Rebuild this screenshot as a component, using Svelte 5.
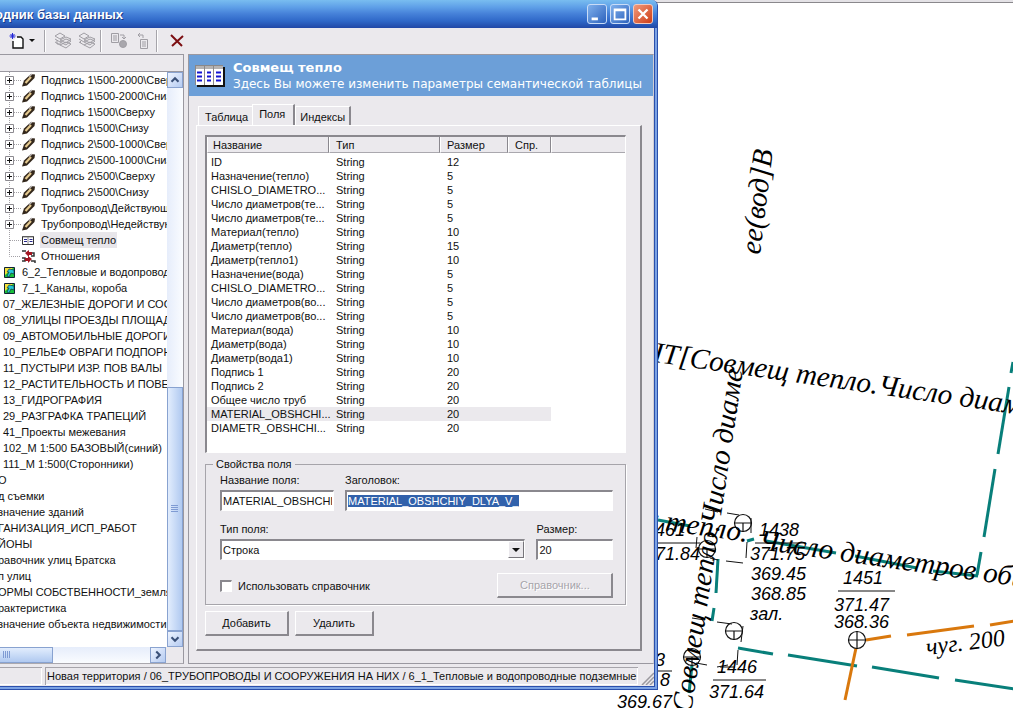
<script>
  import { onMount } from 'svelte';

  const pens = [
    'Подпись 1\\500-2000\\Сверху', 'Подпись 1\\500-2000\\Снизу', 'Подпись 1\\500\\Сверху',
    'Подпись 1\\500\\Снизу', 'Подпись 2\\500-1000\\Сверху', 'Подпись 2\\500-1000\\Снизу',
    'Подпись 2\\500\\Сверху', 'Подпись 2\\500\\Снизу', 'Трубопровод\\Действующий',
    'Трубопровод\\Недействующий'
  ];
  const tree = [
    ...pens.map((text) => ({ text, kind: 'pen' })),
    { text: 'Совмещ тепло', kind: 'table', selected: true },
    { text: 'Отношения', kind: 'relation' },
    { text: '6_2_Тепловые и водопроводные', kind: 'layer' },
    { text: '7_1_Каналы, короба', kind: 'layer' },
    ...[
      '07_ЖЕЛЕЗНЫЕ ДОРОГИ И СООРУЖЕНИЯ', '08_УЛИЦЫ ПРОЕЗДЫ ПЛОЩАДИ', '09_АВТОМОБИЛЬНЫЕ ДОРОГИ',
      '10_РЕЛЬЕФ ОВРАГИ ПОДПОРНЫЕ', '11_ПУСТЫРИ ИЗР. ПОВ ВАЛЫ', '12_РАСТИТЕЛЬНОСТЬ И ПОВЕРХ',
      '13_ГИДРОГРАФИЯ', '29_РАЗГРАФКА ТРАПЕЦИЙ', '41_Проекты межевания',
      '102_М 1:500 БАЗОВЫЙ(синий)', '111_М 1:500(Сторонники)'
    ].map((text) => ({ text, kind: 'group' })),
    ...[
      'О', 'д съемки', 'значение зданий', 'ГАНИЗАЦИЯ_ИСП_РАБОТ', 'ЙОНЫ', 'равочник улиц Братска',
      'п улиц', 'ОРМЫ СОБСТВЕННОСТИ_земля', 'рактеристика', 'значение объекта недвижимости'
    ].map((text) => ({ text, kind: 'root' }))
  ];

  const fields = [
    ['ID', 12], ['Назначение(тепло)', 5], ['CHISLO_DIAMETRO...', 5], ['Число диаметров(те...', 5],
    ['Число диаметров(те...', 5], ['Материал(тепло)', 10], ['Диаметр(тепло)', 15],
    ['Диаметр(тепло1)', 10], ['Назначение(вода)', 5], ['CHISLO_DIAMETRO...', 5],
    ['Число диаметров(во...', 5], ['Число диаметров(во...', 5], ['Материал(вода)', 10],
    ['Диаметр(вода)', 10], ['Диаметр(вода1)', 10], ['Подпись 1', 20], ['Подпись 2', 20],
    ['Общее число труб', 20], ['MATERIAL_OBSHCHI...', 20], ['DIAMETR_OBSHCHI...', 20]
  ];
  let selected = $state(18);
  let caption;

  onMount(() => {
    caption.focus();
    caption.select();
  });

  const teal = [
    [1013, 362, 1011, 373], [1009, 387, 998, 454], [995, 469, 984, 537], [981, 552, 977, 575],
    [658, 520, 690, 526], [747, 541, 754, 539], [766, 541, 836, 553], [855, 556, 917, 568],
    [933, 571, 978, 576], [738, 648, 773, 654], [788, 655, 857, 666], [872, 667, 939, 678],
    [955, 680, 1014, 689], [718, 559, 716, 593], [714, 608, 712, 621], [692, 665, 689, 693]
  ];
  const orange = [[866, 640, 891, 636], [907, 635, 974, 626], [990, 625, 1014, 621], [856, 648, 845, 700]];
  const thin = [
    [705, 509, 718, 512], [727, 513, 739, 515], [751, 518, 751, 533], [747, 542, 746, 558],
    [743, 563, 726, 561], [718, 560, 710, 558], [697, 537, 696, 548], [692, 618, 705, 620],
    [717, 622, 732, 624], [743, 626, 741, 642], [738, 650, 737, 665], [707, 665, 696, 663],
    [717, 667, 728, 665], [755, 543, 806, 543], [838, 591, 895, 591], [713, 680, 766, 680],
    [658, 543, 700, 543], [655, 671, 672, 671], [720, 667, 735, 667]
  ];
  const wells = [[743, 523], [707, 549], [734, 631], [692, 657], [857, 640]];
  const labels = [
    ['1438', 759, 536], ['371.75', 750, 560], ['369.45', 751, 580], ['368.85', 751, 600], ['зал.', 750, 620],
    ['1451', 843, 584], ['371.47', 834, 611], ['368.36', 834, 628], ['1446', 717, 673], ['371.64', 709, 698],
    ['369.67', 617, 708]
  ];
  const cutLabels = [['1461', 685, 536], ['371.84', 700, 560], ['3', 665, 666], ['8', 670, 686]];
</script>

<div class="desktop">
  <svg class="map" aria-label="План">
    <rect x="0" y="0" width="100%" height="2" fill="#e4e2e6" />
    <rect x="0" y="2" width="100%" height="1" fill="#8a888c" />
    <g stroke="#087f7a" stroke-width="3">
      {#each teal as [x1, y1, x2, y2]}<line {x1} {y1} {x2} {y2} />{/each}
    </g>
    <g stroke="#d9780d" stroke-width="3">
      {#each orange as [x1, y1, x2, y2]}<line {x1} {y1} {x2} {y2} />{/each}
    </g>
    <g stroke="#111" stroke-width="1">
      {#each thin as [x1, y1, x2, y2]}<line {x1} {y1} {x2} {y2} />{/each}
    </g>
    {#each wells as [x, y], i}
      <g stroke="#111" stroke-width="1.2" fill={i === 4 ? '#fff' : 'none'}>
        <circle cx={x} cy={y} r="8.500" />
        <path d="M{x - 9} {y}H{x + 9}M{x} {i === 4 ? y - 9 : y}V{y + 9}" />
      </g>
    {/each}
    <g class="marks">
      {#each labels as [t, x, y]}<text {x} {y}>{t}</text>{/each}
      {#each cutLabels as [t, x, y]}<text {x} {y} text-anchor="end">{t}</text>{/each}
    </g>
    <g class="notes">
      <text transform="translate(760 255) rotate(-83)">ее(вод]В</text>
      <text transform="translate(641 360) rotate(8.2)">НТ[Совмещ тепло.Число диаметров</text>
      <text transform="translate(743 370) rotate(-81.4)" text-anchor="end">Совмещ тепло.Число диаме</text>
      <text transform="translate(747 542) rotate(8.2)" text-anchor="end">Совмещ тепло.</text>
      <text transform="translate(758 549) rotate(8.2)">Число диаметров общее</text>
      <text class="pipe" transform="translate(927 655) rotate(-7)">чуг. 200</text>
    </g>
  </svg>

  <main class="window">
    <header class="title">
      <h1>одник базы данных</h1>
      <button class="cap" aria-label="Свернуть"><svg viewBox="0 0 20 20"><path d="M4 14h7v3H4z" fill="#fff" /></svg></button>
      <button class="cap" aria-label="Развернуть"><svg viewBox="0 0 20 20"><path d="M4 5h12v11H4z M4 6h12" fill="none" stroke="#fff" stroke-width="2" /></svg></button>
      <button class="cap close" aria-label="Закрыть"><svg viewBox="0 0 20 20"><path d="M5 5l10 10M15 5L5 15" stroke="#fff" stroke-width="2.600" /></svg></button>
    </header>

    <div class="face">
      <div class="toolbar">
        <button class="new" aria-label="Создать">
          <svg width="26" height="18" viewBox="0 0 26 18">
            <path d="M8 5h4l2 2v9H4V9" fill="#fff" stroke="#111" stroke-width="1.4" />
            <path d="M3.500 1v6M0.500 4h6M1.500 2l4 4M5.500 2l-4 4" stroke="#2326d8" />
            <path d="M20 7h6l-3 3z" fill="#111" />
          </svg>
        </button>
        <i class="sep"></i>
        {#each [0, 1] as n}
          <button class="tool" aria-label={n ? 'Убрать слой' : 'Добавить слой'}>
            <svg width="18" height="18" viewBox="0 0 18 18" fill="#ebe9ed" stroke="#a09ea4">
              <path d="M1 4l5-3 5 3-5 3zM1 7l5 3M1 10l5 3" />
              <path d="M6 13l6-3 5 2-5 4zM6 10l6-3 5 2-5 4zM6 8l6-3 5 2-5 4z" />
              <path d={n ? 'M4 12l-2-2 2-2' : 'M3 8v4h4'} fill="none" />
            </svg>
          </button>
        {/each}
        <i class="sep"></i>
        <button class="tool" aria-label="Свойства">
          <svg width="18" height="18" viewBox="0 0 18 18" fill="none" stroke="#a09ea4">
            <path d="M1.500 1.500h7v9h-7zM3 4h4M3 6h4M3 8h4M10 3h4v4M12 5l2 2 2-2" />
            <circle cx="13" cy="12" r="3.500" fill="#a9a7ad" />
          </svg>
        </button>
        <button class="tool" aria-label="Переместить">
          <svg width="18" height="18" viewBox="0 0 18 18" fill="none" stroke="#a09ea4">
            <path d="M6.500 7.500h7v9h-7zM8 10h4M8 12h4M8 14h4M9 6V3H4M6 1L4 3l2 2" />
          </svg>
        </button>
        <i class="sep"></i>
        <button class="tool del" aria-label="Удалить слой">
          <svg width="14" height="14" viewBox="0 0 14 14"><path d="M1 1l11 11M13 2L2 12" stroke="#7c0e12" stroke-width="2" /></svg>
        </button>
      </div>

      <div class="split">
        <section class="side">
          <div class="strip"></div>
          <div class="sidebody">
            <ul class="tree">
              {#each tree as n}
                <li class={n.kind} class:selected={n.selected}>
                  {#if n.kind === 'pen'}
                    <svg width="40" height="16" viewBox="0 0 40 16">
                      <path d="M9.500 0v16M14 8.500h7" stroke="#a3a1a6" stroke-dasharray="1 1" />
                      <path d="M5.500 4.500h8v8h-8z" fill="#fff" stroke="#8c8a90" />
                      <path d="M7 8.500h5M9.500 6v5" stroke="#111" />
                      <path d="M22 14.500l2-6 7-6.500 4 .5-.5 3.500-7.500 7.500z" fill="#33271b" />
                      <path d="M25.500 11l5.500-6" stroke="#e3c88e" stroke-width="2.200" />
                      <path d="M29 4.500l3-2.500" stroke="#b8b4b4" stroke-width="1.500" />
                    </svg>
                  {:else if n.kind === 'table'}
                    <svg width="40" height="16" viewBox="0 0 40 16">
                      <path d="M9.500 0v16M10 8.500h11" stroke="#a3a1a6" stroke-dasharray="1 1" />
                      <path d="M22.500 4.500h11v8h-11z" fill="#fff" stroke="#333" />
                      <path d="M23 5h10M28 5v7" stroke="#888" />
                      <path d="M24 7.500h3M24 9.500h3M29.500 7.500h3M29.500 9.500h3" stroke="#27278c" />
                    </svg>
                  {:else if n.kind === 'relation'}
                    <svg width="40" height="16" viewBox="0 0 40 16">
                      <path d="M9.500 0v8.500h11" fill="none" stroke="#a3a1a6" stroke-dasharray="1 1" />
                      <path d="M22 3h4M22 10h3v3h-3M31 5h3v3h-3M31 13h4v2" fill="none" stroke="#333" stroke-width="1.500" />
                      <path d="M25 5l4-3v2h3v3h-3v2zM32 11l-4-3v2h-3v3h3v2z" fill="#a31622" />
                    </svg>
                  {:else if n.kind === 'layer'}
                    <svg width="20" height="16" viewBox="0 0 20 16">
                      <path d="M3.500 3.500h10v10h-10z" fill="#19c03c" stroke="#123" />
                      <path d="M4 4h8l-8 7z" fill="#f3e23a" />
                      <path d="M6 8l2-3 5 1v4l-3-1-2 4-2-1 2-4z" fill="#24c7d8" stroke="#123" stroke-width=".6" />
                    </svg>
                  {/if}
                  <span>{n.text}</span>
                </li>
              {/each}
            </ul>
            <div class="vbar">
              <button class="arrow" aria-label="Вверх"><svg viewBox="0 0 16 16"><path d="M4 10l4-4 4 4" /></svg></button>
              <div class="vspace"></div>
              <div class="thumb"><svg width="8" height="9"><path d="M0 1.500h7M0 3.500h7M0 5.500h7M0 7.500h7" stroke="#7f9bd3" /></svg></div>
              <button class="arrow" aria-label="Вниз"><svg viewBox="0 0 16 16"><path d="M4 6l4 4 4-4" /></svg></button>
            </div>
          </div>
          <div class="hbar">
            <div class="hthumb"><svg width="9" height="8"><path d="M1.500 0v7M3.500 0v7M5.500 0v7M7.500 0v7" stroke="#7f9bd3" /></svg></div>
            <button class="arrow" aria-label="Вправо"><svg viewBox="0 0 16 16"><path d="M6 4l4 4-4 4" /></svg></button>
          </div>
        </section>

        <section class="content">
          <div class="banner">
            <svg width="30" height="22" viewBox="0 0 30 22">
              <path d="M2 2h28v20H2z" fill="#111" />
              <path d="M0 0h28v20H0z" fill="#fff" />
              <path d="M0 0h28v4H0z" fill="#b5b3b3" />
              <path d="M9.500 0v20M18.500 0v20M0 .5h28M.5 0v20" stroke="#8a8888" />
              <path d="M2 7.500h5M2 11.500h5M2 15.500h5M12 7.500h4M12 11.500h4M12 15.500h4M21 7.500h5M21 11.500h5M21 15.500h5" stroke="#1414d2" stroke-width="2" />
            </svg>
            <div>
              <h2>Совмещ тепло</h2>
              <p>Здесь Вы можете изменить параметры семантической таблицы</p>
            </div>
          </div>

          <div class="tabs" role="tablist">
            <button role="tab" aria-selected="false">Таблица</button>
            <button role="tab" aria-selected="true" class="on">Поля</button>
            <button role="tab" aria-selected="false">Индексы</button>
          </div>

          <div class="pane">
            <div class="list">
              <table>
                <colgroup><col class="c1" /><col class="c2" /><col class="c3" /><col class="c4" /><col /></colgroup>
                <thead><tr><th>Название</th><th>Тип</th><th>Размер</th><th>Спр.</th><th></th></tr></thead>
                <tbody>
                  {#each fields as [name, size], i}
                    <tr class:sel={selected === i} onclick={() => (selected = i)}>
                      <td>{name}</td><td>String</td><td>{size}</td><td></td><td></td>
                    </tr>
                  {/each}
                </tbody>
              </table>
            </div>

            <fieldset>
              <legend>Свойства поля</legend>
              <div class="row first">
                <label class="name">Название поля:<input value="MATERIAL_OBSHCHI" /></label>
                <label class="grow">Заголовок:<input bind:this={caption} value="MATERIAL_OBSHCHIY_DLYA_V_" /></label>
              </div>
              <div class="row second">
                <label class="grow">Тип поля:
                  <span class="combo">
                    <select><option>Строка</option></select>
                    <span class="drop"></span>
                  </span>
                </label>
                <label class="size">Размер:<input value="20" /></label>
              </div>
              <div class="row third">
                <label class="check"><input type="checkbox" />Использовать справочник</label>
                <button class="btn wide" disabled>Справочник...</button>
              </div>
            </fieldset>

            <div class="actions">
              <button class="btn add">Добавить</button>
              <button class="btn">Удалить</button>
            </div>
          </div>
        </section>
      </div>

      <footer class="status">
        <span class="cell small"></span>
        <span class="cell path">Новая территория / 06_ТРУБОПРОВОДЫ И СООРУЖЕНИЯ НА НИХ / 6_1_Тепловые и водопроводные подземные</span>
        <svg class="grip" width="13" height="13"><path d="M1 13L13 1M5 13l8-8M9 13l4-4" stroke="#9b999f" stroke-width="1.500" /></svg>
      </footer>
    </div>
  </main>
</div>

<style>
  :global(body) { margin: 0; background: #fff; }
  * { box-sizing: border-box; }
  .desktop {
    position: relative; height: 100vh; min-height: 708px; overflow: hidden; color: #111;
    font: 11px/14px "Liberation Sans", Arial, sans-serif;
  }
  button, input, select { font: inherit; color: inherit; margin: 0; border-radius: 0; }
  .map { position: absolute; inset: 0; width: 100%; height: 100%; }
  .marks { font: italic 18px "Liberation Sans", Arial, sans-serif; }
  .notes { font: italic 29px "Liberation Serif", "Times New Roman", serif; }
  .pipe { font-size: 24px; }

  .window {
    position: absolute; left: 0; top: 0; bottom: 18px; width: 65%;
    display: flex; flex-direction: column; overflow: hidden;
    background: #7ba2e4; border: solid #2b50ac; border-width: 0 1px 1px 0;
    padding: 0 2px 2px 0; border-top-right-radius: 6px;
  }
  .title {
    flex: none; height: 28px; display: flex; align-items: center; gap: 3px; padding-right: 4px; margin-right: -2px;
    background: linear-gradient(#79bdf0, #5fa0e8 25%, #4580d8 50%, #2f68c8 75%, #2148a6);
  }
  h1 { flex: 1; margin: 2px 0 0 -5px; font-size: 13px; line-height: 16px; color: #fff; text-shadow: 1px 1px #1b3a86; white-space: nowrap; }
  .cap { width: 20px; height: 20px; padding: 0; border: 1px solid #c9dcf7; border-radius: 3px; background: linear-gradient(135deg, #7fb0ec, #2d62bd); }
  .cap svg { display: block; width: 18px; height: 18px; }
  .close { background: linear-gradient(135deg, #f09a7c, #cf3d16); border-color: #f3c9bd; }

  .face { flex: 1; min-height: 0; display: flex; flex-direction: column; background: #ebe9ed; border: solid #2b50ac; border-width: 0 1px 1px 0; }
  .toolbar { flex: none; height: 26px; display: flex; align-items: center; padding-left: 9px; }
  .toolbar button { border: 0; padding: 0; background: none; display: flex; }
  .sep { width: 2px; height: 22px; border-left: 1px solid #a6a4aa; border-right: 1px solid #fff; margin: 0 8px 0 4px; }
  .toolbar .new { margin-right: 5px; }
  .toolbar .tool + .tool { margin-left: 6px; }
  .toolbar .del { margin-left: 4px; }

  .split { flex: 1; min-height: 0; display: flex; gap: 4px; }
  .side { flex: none; width: 184px; display: flex; flex-direction: column; border: 1px solid #9a98a0; border-left: 0; border-bottom-color: #aaa8ae; }
  .strip { height: 17px; border-bottom: 1px solid #9a98a0; }
  .sidebody { flex: 1; min-height: 0; display: flex; background: #fff; }
  .tree { flex: 1; min-width: 0; margin: 0; padding: 0; list-style: none; overflow: hidden; white-space: nowrap; }
  .tree li { display: flex; height: 16px; align-items: center; }
  .tree li svg { flex: none; }
  .tree span { padding: 0 1px; line-height: 16px; }
  .group { padding-left: 2px; }
  .layer { padding-left: 1px; }
  .root { margin-left: -3px; }
  .selected span { background: #e8e6ea; }
  .vbar { flex: none; width: 16px; display: flex; flex-direction: column; background: linear-gradient(90deg, #e6edfb, #fafcff); }
  .arrow { flex: none; width: 16px; height: 16px; padding: 0; border: 1px solid #8aa3d0; background: linear-gradient(135deg, #eef4ff, #b5cbf1); }
  .arrow svg { display: block; width: 14px; height: 14px; fill: none; stroke: #3a5078; stroke-width: 2.4; }
  .thumb, .hthumb { display: flex; align-items: center; justify-content: center; border: 1px solid #88a2d0; }
  .vspace { flex: 300; }
  .thumb { flex: 243; background: linear-gradient(90deg, #e2edfd, #b0c9f0); }
  .hbar { flex: none; height: 16px; display: flex; justify-content: space-between; margin-right: 17px; background: linear-gradient(#e6edfb, #fafcff); }
  .hthumb { width: 32%; justify-content: flex-start; padding-left: 2px; border-left: 0; background: linear-gradient(#e2edfd, #b0c9f0); }

  .content { flex: 1; min-width: 0; display: flex; flex-direction: column; border: 1px solid #9a98a0; border-right-color: #d0ced4; }
  .banner { flex: none; height: 41px; display: flex; gap: 8px; padding: 5px 0 0 6px; background: #6c9fd8; color: #fff; font: 12px/16px "DejaVu Sans", Verdana, sans-serif; white-space: nowrap; overflow: hidden; }
  .banner svg { margin-top: 5px; }
  h2, .banner p { margin: 0; line-height: 16px; }
  h2 { font-size: 13px; }
  .banner p { font-size: 12px; }
  .tabs { flex: none; display: flex; align-items: flex-end; height: 29px; padding-left: 9px; }
  .tabs button { height: 19px; padding: 2px 4px 0 6px; background: #ebe9ed; border: solid #fff; border-width: 1px 0 0 1px; }
  .tabs .on { height: 21px; padding: 0 8px 2px 6px; }
  .tabs button:last-child { padding-left: 4px; }
  .tabs .on, .tabs button:last-child { border-right: 2px solid #8a888e; }
  .pane { flex: 1; margin: 0 11px 12px 7px; padding: 9px 14px 0 8px; border: 1px solid #fff; border-right: 2px solid #8a888e; border-bottom: 2px solid #8a888e; }
  .list { height: 318px; background: #fff; border: 2px solid #8a888e; border-right: 1px solid #fff; border-bottom: 1px solid #fff; }
  table { width: 100%; table-layout: fixed; border-collapse: separate; border-spacing: 0; }
  .c1 { width: 122px; } .c2 { width: 111px; } .c3 { width: 68px; } .c4 { width: 43px; }
  th { height: 16px; padding: 0 6px; text-align: left; font-weight: normal; background: #ebe9ed; border-right: 1px solid #8a888e; border-bottom: 1px solid #aaa8ae; border-left: 1px solid #fff; }
  th:first-child { padding-left: 5px; }
  th:last-child { border-right: 0; }
  tbody::before { content: ''; display: block; height: 2px; }
  td { height: 14px; padding: 0 0 0 7px; line-height: 14px; white-space: nowrap; }
  td:first-child { padding-left: 4px; }
  .sel td:not(:last-child) { background: #ebe9ed; }

  fieldset { margin: 4px 0 0; padding: 0 12px 6px 14px; border: 1px solid #a6a4aa; box-shadow: 1px 1px #fff; min-width: 0; }
  legend { padding: 0 3px; margin-left: -7px; line-height: 14px; }
  .row { display: flex; gap: 11px; }
  .row label { display: flex; flex-direction: column; gap: 3px; }
  .first { margin-top: 2px; }
  .second { margin-top: 11px; }
  .third { margin-top: 13px; justify-content: space-between; align-items: center; }
  .name { width: 114px; } .size { width: 77px; } .row .grow { flex: 1; min-width: 0; }
  input:not([type]), select { width: 100%; height: 21px; padding: 0 1px; background: #fff; outline: 0; border: 2px solid #8a888e; border-right: 1px solid #fff; border-bottom: 1px solid #fff; }
  input::selection { background: #3161ab; color: #fff; }
  .combo { position: relative; display: block; }
  select { display: block; appearance: none; }
  .drop { position: absolute; right: 1px; top: 2px; width: 16px; height: 17px; pointer-events: none; background: #ebe9ed; border: 1px solid #fff; border-right-color: #77757b; border-bottom-color: #77757b; }
  .drop::after { content: ''; position: absolute; left: 3px; top: 6px; border: 4px solid transparent; border-top-color: #111; border-bottom: 0; }
  .row .check { flex-direction: row; align-items: center; gap: 6px; }
  .check input { appearance: none; width: 12px; height: 12px; background: #fff; border: 2px solid #8a888e; border-right: 1px solid #fff; border-bottom: 1px solid #fff; }
  .btn { height: 25px; min-width: 79px; padding: 0 6px; background: #ebe9ed; border: 1px solid #fff; border-right: 2px solid #8a888e; border-bottom: 2px solid #8a888e; }
  .btn:disabled { color: #a6a4aa; text-shadow: 1px 1px #fff; }
  .wide { width: 116px; } .add { width: 84px; }
  .actions { display: flex; gap: 6px; margin-top: 6px; }

  .status { flex: none; height: 22px; display: flex; gap: 3px; padding: 3px 0 1px; white-space: nowrap; }
  .cell { border: solid #a6a4aa; border-width: 1px 0 0 1px; box-shadow: inset -1px -1px #fff; overflow: hidden; line-height: 17px; }
  .small { flex: none; width: 42px; border-left: 0; }
  .path { flex: 1; min-width: 0; padding-left: 1px; }
  .grip { flex: none; align-self: flex-end; }
</style>
